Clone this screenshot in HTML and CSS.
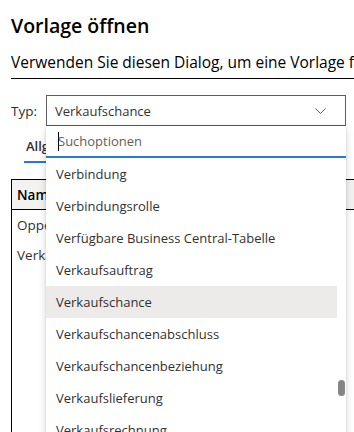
FILE: index.html
```html
<!DOCTYPE html>
<html lang="de">

<head>
    <meta charset="UTF-8">
    <meta name="viewport" content="width=device-width, initial-scale=1.0">
    <title>Vorlage öffnen</title>
    <link rel="stylesheet" href="styles.css">
</head>

<body>
    <div class="page">
        <div class="dialog">
            <h1>Vorlage öffnen</h1>
            <p class="intro">Verwenden Sie diesen Dialog, um eine Vorlage für Ihre Daten zu öffnen.</p>

            <div class="field">
                <label for="typ">Typ:</label>
                <div class="combo">
                    <div class="select" id="typ">
                        <span>Verkaufschance</span>
                        <svg class="chevron" width="11" height="6" viewBox="0 0 11 6">
                            <path d="M0.5 0.5 L5.5 5.5 L10.5 0.5" fill="none" stroke="#605e5c" stroke-width="1"/>
                        </svg>
                    </div>

                    <!-- aufgeklappte Liste liegt über dem Inhalt -->
                    <div class="dropdown">
                        <div class="search"><span class="caret"></span>Suchoptionen</div>
                        <ul class="options">
                            <li>Verbindung</li>
                            <li>Verbindungsrolle</li>
                            <li>Verfügbare Business Central-Tabelle</li>
                            <li>Verkaufsauftrag</li>
                            <li class="active">Verkaufschance</li>
                            <li>Verkaufschancenabschluss</li>
                            <li>Verkaufschancenbeziehung</li>
                            <li>Verkaufslieferung</li>
                            <li>Verkaufsrechnung</li>
                        </ul>
                        <div class="thumb"></div>
                    </div>
                </div>
            </div>

            <div class="tabs">
                <span class="tab selected">Allgemein</span>
            </div>

            <table class="grid">
                <thead>
                    <tr><th>Name</th><th>Beschreibung</th></tr>
                </thead>
                <tbody>
                    <tr><td>Opportunity</td><td></td></tr>
                    <tr><td>Verkaufschance</td><td></td></tr>
                    <tr><td></td><td></td></tr>
                    <tr><td></td><td></td></tr>
                    <tr><td></td><td></td></tr>
                    <tr><td></td><td></td></tr>
                    <tr><td></td><td></td></tr>
                    <tr><td></td><td></td></tr>
                    <tr><td></td><td></td></tr>
                </tbody>
            </table>
        </div>
    </div>
</body>

</html>
```

FILE: styles.css
```css
:root {
    --text: #000000;
    --muted: #323130;
    --placeholder: #605e5c;
    --border: #605e5c;
    --accent: #2b78d0;
    --hover: #edebe9;
    --header: #f3f2f1;
}

body {
    margin: 0;
    padding: 0;
    font-family: 'Open Sans', 'Noto Sans', sans-serif;
    color: var(--text);
    background: #fff;
}

.page {
    width: 354px;
    height: 432px;
    overflow: hidden;
    position: relative;
}

.dialog {
    padding: 0 0 0 11px;
    width: 420px;
}

h1 {
    margin: 0;
    padding-top: 12px;
    font-size: 19.5px;
    font-weight: 600;
    line-height: 28px;
}

.intro {
    margin: 10px 0 0 0;
    font-size: 15.5px;
    line-height: 24px;
    white-space: nowrap;
    overflow: hidden;
    border-bottom: 1px solid #000;
    padding-bottom: 4px;
    width: 343px;
}

.field {
    display: flex;
    align-items: center;
    margin-top: 16px;
}

label {
    width: 35px;
    font-size: 13.5px;
    color: var(--muted);
}

.combo {
    position: relative;
    width: 300px;
}

.select {
    height: 29px;
    border: 1px solid var(--border);
    display: flex;
    align-items: center;
    justify-content: space-between;
    padding: 0 19px 0 8px;
    font-size: 13px;
    color: var(--muted);
}

.chevron {
    margin-top: 1px;
}

.dropdown {
    position: absolute;
    top: 31px;
    left: 0;
    width: 300px;
    background: #fff;
    box-shadow: 0 3px 8px rgba(0, 0, 0, 0.16), 0 0 2px rgba(0, 0, 0, 0.12);
    z-index: 2;
    height: 320px;
    overflow: hidden;
}

.search {
    height: 30px;
    border-bottom: 2px solid var(--accent);
    display: flex;
    align-items: center;
    padding-left: 12px;
    font-size: 13px;
    color: var(--placeholder);
}

.caret {
    width: 1px;
    height: 19px;
    background: #000;
    margin-right: -1px;
}

.options {
    list-style: none;
    margin: 0;
    padding: 0;
    width: 291px;
}

.options li {
    height: 32px;
    line-height: 32px;
    padding-left: 10px;
    font-size: 13px;
    color: var(--muted);
    white-space: nowrap;
}

.options li.active {
    background: var(--hover);
}

.thumb {
    position: absolute;
    right: 1px;
    top: 254px;
    width: 7px;
    height: 16px;
    border-radius: 4px;
    background: #858585;
}

.tabs {
    margin-top: 5px;
    padding-left: 13px;
    height: 32px;
}

.tab {
    display: inline-block;
    font-size: 13px;
    font-weight: 600;
    color: var(--muted);
    line-height: 30px;
    border-bottom: 2px solid var(--accent);
    padding: 0 2px;
}

.grid {
    margin-top: 16px;
    border-collapse: collapse;
    border: 1px solid #000;
    width: 400px;
    font-size: 13.5px;
}

.grid th {
    background: var(--header);
    text-align: left;
    font-weight: 600;
    height: 29px;
    padding: 0 5px;
    border-bottom: 1px solid #000;
}

.grid td {
    height: 30px;
    padding: 0 5px;
    color: var(--muted);
}
```
